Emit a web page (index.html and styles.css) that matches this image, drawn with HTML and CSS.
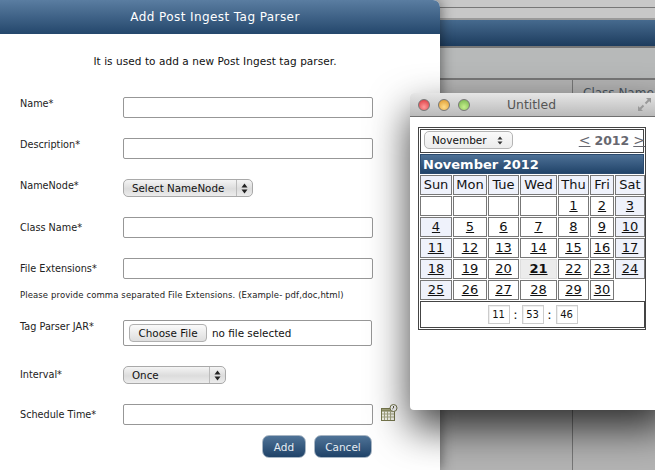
FILE: index.html
```html
<!DOCTYPE html>
<html lang="en">
<head>
<meta charset="utf-8">
<title>Add Post Ingest Tag Parser</title>
<link rel="stylesheet" href="styles.css">
</head>
<body>
<div class="backdrop">
  <div class="bg-top"></div>
  <div class="bg-band"></div>
  <div class="bg-mid"></div>
  <div class="bg-head"><span class="bg-col">Class Name</span></div>
</div>

<section class="modal">
  <header class="modal-title">Add Post Ingest Tag Parser</header>
  <p class="intro">It is used to add a new Post Ingest tag parser.</p>
  <form class="form">
    <div class="row"><label class="label">Name*</label><input class="input" type="text"></div>
    <div class="row"><label class="label">Description*</label><input class="input" type="text"></div>
    <div class="row"><label class="label">NameNode*</label>
      <div class="select select-nn"><span class="select-text">Select NameNode</span><span class="select-arrows"><svg width="7" height="11" viewBox="0 0 7 11"><path d="M3.5 0.5 L6.5 4.5 H0.5 Z M3.5 10.5 L6.5 6.5 H0.5 Z" fill="#222"/></svg></span></div>
    </div>
    <div class="row"><label class="label label-mid">Class Name*</label><input class="input" type="text"></div>
    <div class="row row-tight"><label class="label label-mid">File Extensions*</label><input class="input" type="text"></div>
    <p class="hint">Please provide comma separated File Extensions. (Example- pdf,doc,html)</p>
    <div class="row"><label class="label">Tag Parser JAR*</label>
      <div class="filebox"><span class="filebtn">Choose File</span><span class="filetext">no file selected</span></div>
    </div>
    <div class="row"><label class="label label-mid">Interval*</label>
      <div class="select select-int"><span class="select-text">Once</span><span class="select-arrows"><svg width="7" height="11" viewBox="0 0 7 11"><path d="M3.5 0.5 L6.5 4.5 H0.5 Z M3.5 10.5 L6.5 6.5 H0.5 Z" fill="#222"/></svg></span></div>
    </div>
    <div class="row row-tight"><label class="label label-mid">Schedule Time*</label><input class="input" type="text">
      <svg class="cal-icon" width="17" height="18" viewBox="0 0 17 18">
        <rect x="0.5" y="4.5" width="13" height="12" fill="#f4f4ea" stroke="#77784e"/>
        <rect x="0.5" y="4.5" width="13" height="2.5" fill="#a5a67c" stroke="#77784e"/>
        <path d="M3.5 7v9M6.5 7v9M9.5 7v9M1 10h12M1 13h12" stroke="#a4a584" stroke-width="1" fill="none"/>
        <circle cx="12.5" cy="4" r="3.5" fill="#fff" stroke="#77784e"/>
        <path d="M12.5 2v2l-1.2 1" stroke="#55563a" fill="none"/>
      </svg>
    </div>
    <div class="actions"><span class="btn btn-add">Add</span><span class="btn btn-cancel">Cancel</span></div>
  </form>
</section>

<section class="popup">
  <header class="popup-bar">
    <span class="light light-r"></span><span class="light light-y"></span><span class="light light-g"></span>
    <span class="popup-title">Untitled</span>
    <svg class="expand" width="15" height="15" viewBox="0 0 15 15"><path d="M9 1h5v5l-1.8-1.8-3 3-1.4-1.4 3-3zM6 14H1V9l1.8 1.8 3-3 1.4 1.4-3 3z" fill="#999"/></svg>
  </header>
  <div class="popup-body">
    <div class="cal">
      <div class="cal-nav">
        <div class="select select-month"><span class="select-text">November</span><svg width="6" height="9" viewBox="0 0 6 9"><path d="M3 0.5 L5.5 3.5 H0.5 Z M3 8.5 L5.5 5.5 H0.5 Z" fill="#333"/></svg></div>
        <div class="cal-year"><a class="year-link">&lt;</a><b class="year-num">2012</b><a class="year-link">&gt;</a></div>
      </div>
      <div class="cal-month">November 2012</div>
      <table class="cal-grid">
        <colgroup><col class="c1"><col class="c2"><col class="c3"><col class="c4"><col class="c5"><col class="c6"><col class="c7"></colgroup>
        <tr><th>Sun</th><th>Mon</th><th>Tue</th><th>Wed</th><th>Thu</th><th>Fri</th><th>Sat</th></tr>
        <tr><td></td><td></td><td></td><td></td><td><a>1</a></td><td><a>2</a></td><td class="we"><a>3</a></td></tr>
        <tr><td class="we"><a>4</a></td><td><a>5</a></td><td><a>6</a></td><td><a>7</a></td><td><a>8</a></td><td><a>9</a></td><td class="we"><a>10</a></td></tr>
        <tr><td class="we"><a>11</a></td><td><a>12</a></td><td><a>13</a></td><td><a>14</a></td><td><a>15</a></td><td><a>16</a></td><td class="we"><a>17</a></td></tr>
        <tr><td class="we"><a>18</a></td><td><a>19</a></td><td><a>20</a></td><td class="today"><a>21</a></td><td><a>22</a></td><td><a>23</a></td><td class="we"><a>24</a></td></tr>
        <tr><td class="we"><a>25</a></td><td><a>26</a></td><td><a>27</a></td><td><a>28</a></td><td><a>29</a></td><td><a>30</a></td><td class="none"></td></tr>
        <tr><td class="time" colspan="7"><span class="tbox">11</span><span class="colon">:</span><span class="tbox">53</span><span class="colon">:</span><span class="tbox">46</span></td></tr>
      </table>
    </div>
  </div>
</section>
</body>
</html>
```
FILE: styles.css
```css
* { box-sizing: border-box; }
html, body { margin: 0; height: 100%; }
body {
  width: 655px; height: 470px; overflow: hidden; position: relative;
  background: #b3b5b5;
  font-family: "DejaVu Sans", sans-serif;
  color: #222;
}
.backdrop { height: 100%; display: flex; flex-direction: column; }
.bg-top {
  height: 20px; background: #c8c8c8;
  border-top: 7px solid #c8c8c8; position: relative;
  box-shadow: inset 0 1px 0 #777;
  border-bottom: 2px solid #9a9a9a;
}
.bg-band { height: 26px; background: linear-gradient(#466a8e, #1d3c5e); }
.bg-mid { height: 34px; background: #b7b9b9; border-top: 2px solid #777; border-bottom: 2px solid #777; }
.bg-head { flex: 1; background: #b4b4b4; padding: 0 0 0 572px; }
.bg-col { display: block; border-left: 1px solid #777; padding: 6px 0 0 10px; height: 100%; font-size: 12px; color: #4a5560; white-space: nowrap; }

.modal {
  position: absolute; left: 0; top: 0; width: 440px; height: 470px;
  background: #fff; border-top-right-radius: 7px;
  box-shadow: 0 0 14px rgba(0,0,0,.55);
}
.modal-title {
  height: 34px; line-height: 35px; padding-right: 10px; text-align: center;
  background: linear-gradient(#5a7da1, #24476c);
  border-top-right-radius: 7px;
  color: #fff; font-size: 12px; letter-spacing: .42px;
}
.intro { margin: 20px 0 0; padding-right: 10px; text-align: center; font-size: 10.5px; line-height: 14px; color: #111; letter-spacing: .06px; }
.form { padding: 29px 0 0 20px; }
.row { display: flex; align-items: flex-start; margin-bottom: 20px; }
.row-tight { margin-bottom: 10px; }
.label { width: 103px; flex: none; font-size: 9.7px; line-height: 14px; color: #222; }
.label-mid { align-self: center; }
.input { width: 250px; height: 21px; border: 1px solid #979797; border-radius: 2px; background: #fff; margin: 0; padding: 0; }
.cal-icon { margin-left: 8px; flex: none; }
.select {
  display: flex; align-items: center; height: 18px;
  border: 1px solid #a9a9a9; border-radius: 5px;
  background: linear-gradient(#f4f4f4, #dcdcdc 55%, #ececec);
  font-size: 10.3px; color: #111;
}
.select-text { flex: 1; padding-left: 8px; white-space: nowrap; }
.select-arrows { width: 16px; height: 16px; border-left: 1px solid #bbb; display: flex; align-items: center; justify-content: center; }
.select-nn { width: 130px; }
.select-int { width: 103px; }
.filebox { width: 249px; height: 26px; border: 1px solid #979797; border-radius: 2px; display: flex; align-items: center; padding-left: 5px; font-size: 10.4px; color: #111; }
.filebtn { width: 78px; height: 18px; line-height: 17px; text-align: center; border: 1px solid #b0b0b0; border-radius: 4px; background: linear-gradient(#fafafa, #dedede); }
.filetext { margin-left: 5px; }
.hint { margin: 0 0 18px; height: 13px; font-size: 8.5px; line-height: 13px; color: #222; white-space: nowrap; letter-spacing: .1px; }
.actions { display: flex; justify-content: flex-end; gap: 8px; width: 352px; }
.btn {
  height: 23px; line-height: 22px; text-align: center; color: #e6edf3; font-size: 10.5px;
  background: linear-gradient(#4f7397, #1f4268); border-radius: 7px; border: 1px solid #a8b6c4;
}
.btn-add { width: 44px; }
.btn-cancel { width: 58px; }

.popup {
  position: absolute; left: 410px; top: 93px; width: 260px; height: 317px;
  background: #fff; border-radius: 4px;
  box-shadow: 0 18px 40px rgba(0,0,0,.75);
}
.popup-bar {
  height: 24px; display: flex; align-items: center; position: relative; padding-left: 8px; gap: 8px;
  background: linear-gradient(#e6e6e6, #bababa);
  border-bottom: 1px solid #6f6f6f; border-radius: 4px 4px 0 0;
}
.light { width: 12px; height: 12px; border-radius: 50%; border: 1px solid #777; flex: none; }
.light-r { background: radial-gradient(circle at 50% 70%, #ff9a9a, #d8323a); }
.light-y { background: radial-gradient(circle at 50% 70%, #ffdc88, #dc962a); }
.light-g { background: radial-gradient(circle at 50% 70%, #c6f08c, #74b24c); }
.popup-title { position: absolute; left: 97px; top: 5px; font-size: 12.4px; line-height: 14px; color: #555; }
.expand { position: absolute; left: 227px; top: 4px; }
.popup-body { padding: 10px 0 0 8px; }
.cal {
  width: 228px; height: 203px; border: 1px solid #444; padding: 1px; display: flex; flex-direction: column; gap: 1px;
  font-family: "DejaVu Sans", sans-serif;
}
.cal-nav { height: 25px; border: 1px solid #444; display: flex; align-items: center; justify-content: space-between; padding: 0 0 2px 3px; }
.select-month { width: 89px; height: 18px; padding-right: 9px; background: linear-gradient(#fafafa, #ececec); border-color: #b4b4b4; font-size: 10.5px; }
.select-month .select-text { padding-left: 7px; }
.cal-year { display: flex; gap: 4px; align-items: baseline; margin-right: -2px; font-size: 14px; color: #67676f; white-space: nowrap; }
.year-num { font-size: 12.5px; }
.year-link { text-decoration: underline; }
.cal-month { height: 20px; line-height: 20px; padding-left: 2px; color: #fff; font-weight: bold; font-size: 13px; background: linear-gradient(#4d7095, #21446a); border: 1px solid #2a4a6e; }
.cal-grid { border-collapse: separate; border-spacing: 1px; margin: -1px; table-layout: fixed; width: 227px; }
.c1 { width: 32px; } .c2 { width: 34px; } .c3 { width: 31px; } .c4 { width: 37px; } .c5 { width: 31px; } .c6 { width: 24px; } .c7 { width: 30px; }
.cal-grid th, .cal-grid td {
  border: 1px solid #777; padding: 0; height: 20px; text-align: center;
  font-size: 13px; font-weight: normal; color: #111; line-height: 16px;
}
.cal-grid th { background: #eff2fb; }
.cal-grid .we { background: #eff2fb; }
.cal-grid .today { background: #ececec; font-weight: bold; border-color: #ddd; }
.cal-grid .none { border: 0; }
.cal-grid a { text-decoration: underline; }
.cal-grid .time { border-color: #444; height: 27px; }
.tbox { display: inline-block; width: 22px; height: 19px; line-height: 18px; border: 1px solid #ccc; box-shadow: inset 1px 1px 0 #eee; font-size: 10px; vertical-align: middle; }
.colon { display: inline-block; width: 12px; font-size: 13px; vertical-align: middle; }
```
